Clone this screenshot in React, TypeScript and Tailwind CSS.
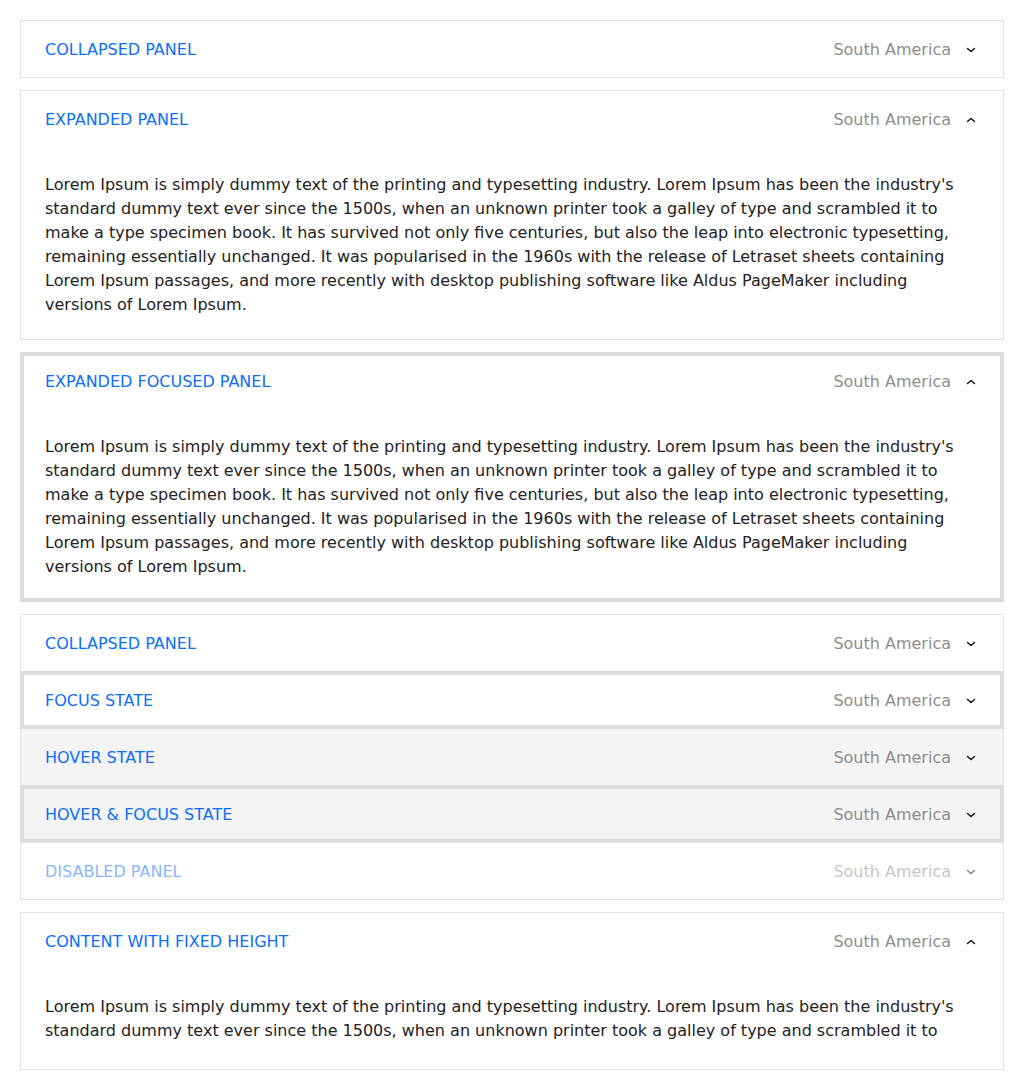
import React from 'react';

const LOREM =
    "Lorem Ipsum is simply dummy text of the printing and typesetting industry. Lorem Ipsum has been the industry's standard dummy text ever since the 1500s, when an unknown printer took a galley of type and scrambled it to make a type specimen book. It has survived not only five centuries, but also the leap into electronic typesetting, remaining essentially unchanged. It was popularised in the 1960s with the release of Letraset sheets containing Lorem Ipsum passages, and more recently with desktop publishing software like Aldus PageMaker including versions of Lorem Ipsum.";

const Chevron = ({up}: {up?: boolean}) => (
    <svg width="16" height="16" viewBox="0 0 16 16" fill="none" className="shrink-0">
        <polyline
            points={up ? "4.5 9.5 8 6.5 11.5 9.5" : "4.5 6.5 8 9.5 11.5 6.5"}
            stroke="#161616"
            strokeWidth="1.5"
            strokeLinecap="round"
            strokeLinejoin="round"
        />
    </svg>
);

type HeaderProps = {
    title: string;
    open?: boolean;
    disabled?: boolean;
};

const Header = ({title, open, disabled}: HeaderProps) => (
    <div className={`h-14 pl-6 pr-6 pt-0.5 flex items-center justify-between ${disabled ? 'opacity-50' : ''}`}>
        <span className="text-[#0d6efd]">{title}</span>
        <div className="flex items-center gap-3">
            <span className="text-[#8d8d8d]">South America</span>
            <Chevron up={open}/>
        </div>
    </div>
);

// focus ring drawn on top of the borders
const FocusRing = () => (
    <span className="pointer-events-none absolute -left-px -right-px -top-px -bottom-px border-4 border-[#dcdcdc]"/>
);

type PanelProps = HeaderProps & {
    focused?: boolean;
    fixed?: boolean;
};

const Panel = ({title, open, focused, fixed}: PanelProps) => (
    <div className="relative border border-[#dee2e6] bg-white">
        <Header title={title} open={open}/>
        {open && (
            fixed ? (
                <div className="px-6 pt-[26px] pb-[26px]">
                    <div className="h-12 overflow-hidden">{LOREM}</div>
                </div>
            ) : (
                <div className="px-6 pt-[26px] pb-[22px]">{LOREM}</div>
            )
        )}
        {focused && <FocusRing/>}
    </div>
);

const groupItems = [
    {title: 'COLLAPSED PANEL'},
    {title: 'FOCUS STATE', focused: true},
    {title: 'HOVER STATE', hover: true},
    {title: 'HOVER & FOCUS STATE', hover: true, focused: true},
    {title: 'DISABLED PANEL', disabled: true},
];

export default function App() {
    return (
        <div
            className="min-h-screen bg-white p-5 text-base leading-6 text-[#222222]"
            style={{fontFamily: '"DejaVu Sans", sans-serif'}}
        >
            <div className="flex flex-col gap-3">
                <Panel title="COLLAPSED PANEL"/>
                <Panel title="EXPANDED PANEL" open/>
                <Panel title="EXPANDED FOCUSED PANEL" open focused/>

                <div className="border-b border-[#dee2e6]">
                    {groupItems.map((item) => (
                        <div
                            key={item.title}
                            className={`relative border-x border-t border-[#dee2e6] ${item.hover ? 'bg-[#f4f4f4]' : 'bg-white'}`}
                        >
                            <Header title={item.title} disabled={item.disabled}/>
                            {item.focused && <FocusRing/>}
                        </div>
                    ))}
                </div>

                <Panel title="CONTENT WITH FIXED HEIGHT" open fixed/>
            </div>
        </div>
    );
}
